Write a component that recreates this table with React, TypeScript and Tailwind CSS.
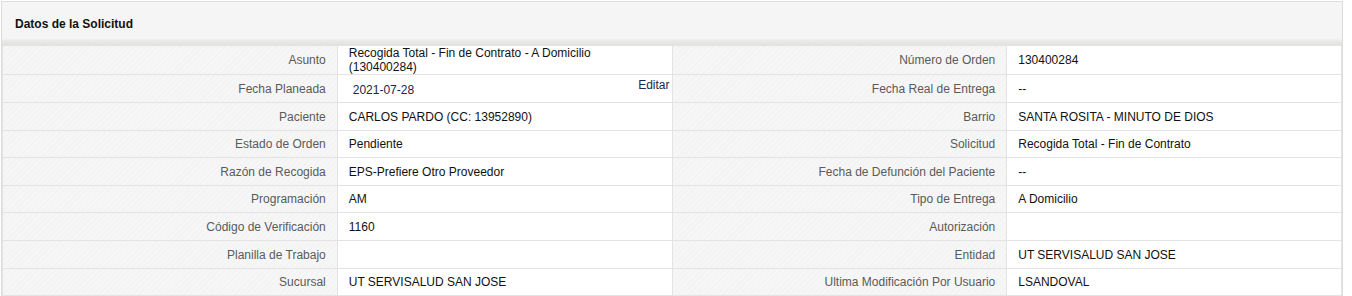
import React from "react";

type Row = { l1: string; v1: React.ReactNode; l2: string; v2: React.ReactNode; h: string };

const ROWS: Row[] = [
  {
    l1: "Asunto",
    v1: (
      <span className="block leading-[14px]">
        Recogida Total - Fin de Contrato - A Domicilio
        <br />
        (130400284)
      </span>
    ),
    l2: "Número de Orden",
    v2: "130400284",
    h: "h-[28px]",
  },
  {
    l1: "Fecha Planeada",
    v1: (
      <div className="relative">
        <span className="relative top-px pl-[4px] text-[#24244a]">2021-07-28</span>
        <span className="absolute right-[1px] -top-[4px] text-[#24244a]">Editar</span>
      </div>
    ),
    l2: "Fecha Real de Entrega",
    v2: "--",
    h: "h-[28px]",
  },
  { l1: "Paciente", v1: "CARLOS PARDO (CC: 13952890)", l2: "Barrio", v2: "SANTA ROSITA - MINUTO DE DIOS", h: "h-[28px]" },
  { l1: "Estado de Orden", v1: "Pendiente", l2: "Solicitud", v2: "Recogida Total - Fin de Contrato", h: "h-[27px]" },
  { l1: "Razón de Recogida", v1: "EPS-Prefiere Otro Proveedor", l2: "Fecha de Defunción del Paciente", v2: "--", h: "h-[28px]" },
  { l1: "Programación", v1: "AM", l2: "Tipo de Entrega", v2: "A Domicilio", h: "h-[27px]" },
  { l1: "Código de Verificación", v1: "1160", l2: "Autorización", v2: "", h: "h-[28px]" },
  { l1: "Planilla de Trabajo", v1: "", l2: "Entidad", v2: "UT SERVISALUD SAN JOSE", h: "h-[28px]" },
  { l1: "Sucursal", v1: "UT SERVISALUD SAN JOSE", l2: "Ultima Modificación Por Usuario", v2: "LSANDOVAL", h: "h-[27px]" },
];

const label =
  "border border-[#e3e3e3] pr-[11px] text-right align-middle text-[#5a5a5a] bg-[repeating-linear-gradient(135deg,#f3f3f3_0px,#f3f3f3_2px,#f7f7f7_2px,#f7f7f7_4px)]";
const value = "border border-[#e3e3e3] bg-white pl-[11px] pr-[1px] text-left align-middle text-[#111]";

export default function App() {
  return (
    <div className="bg-white pl-px pt-px font-['Liberation_Sans',Arial,sans-serif] text-[12px]">
      <div className="w-[1342px] border border-[#dcdcdc] border-b-0">
        <div className="h-[43px] bg-[linear-gradient(to_bottom,#f5f5f5_0px,#f5f5f5_36px,#e9e9e6_39px,#e2e2de_43px)] pl-[13px] pt-[13px] text-[12px] font-bold text-[#111]">
          Datos de la Solicitud
        </div>
        <table className="w-full table-fixed border-collapse">
          <tbody>
            {ROWS.map((r) => (
              <tr key={r.l1} className={r.h}>
                <td className={label}>{r.l1}</td>
                <td className={value}>{r.v1}</td>
                <td className={label}>{r.l2}</td>
                <td className={value}>{r.v2}</td>
              </tr>
            ))}
          </tbody>
        </table>
      </div>
    </div>
  );
}
